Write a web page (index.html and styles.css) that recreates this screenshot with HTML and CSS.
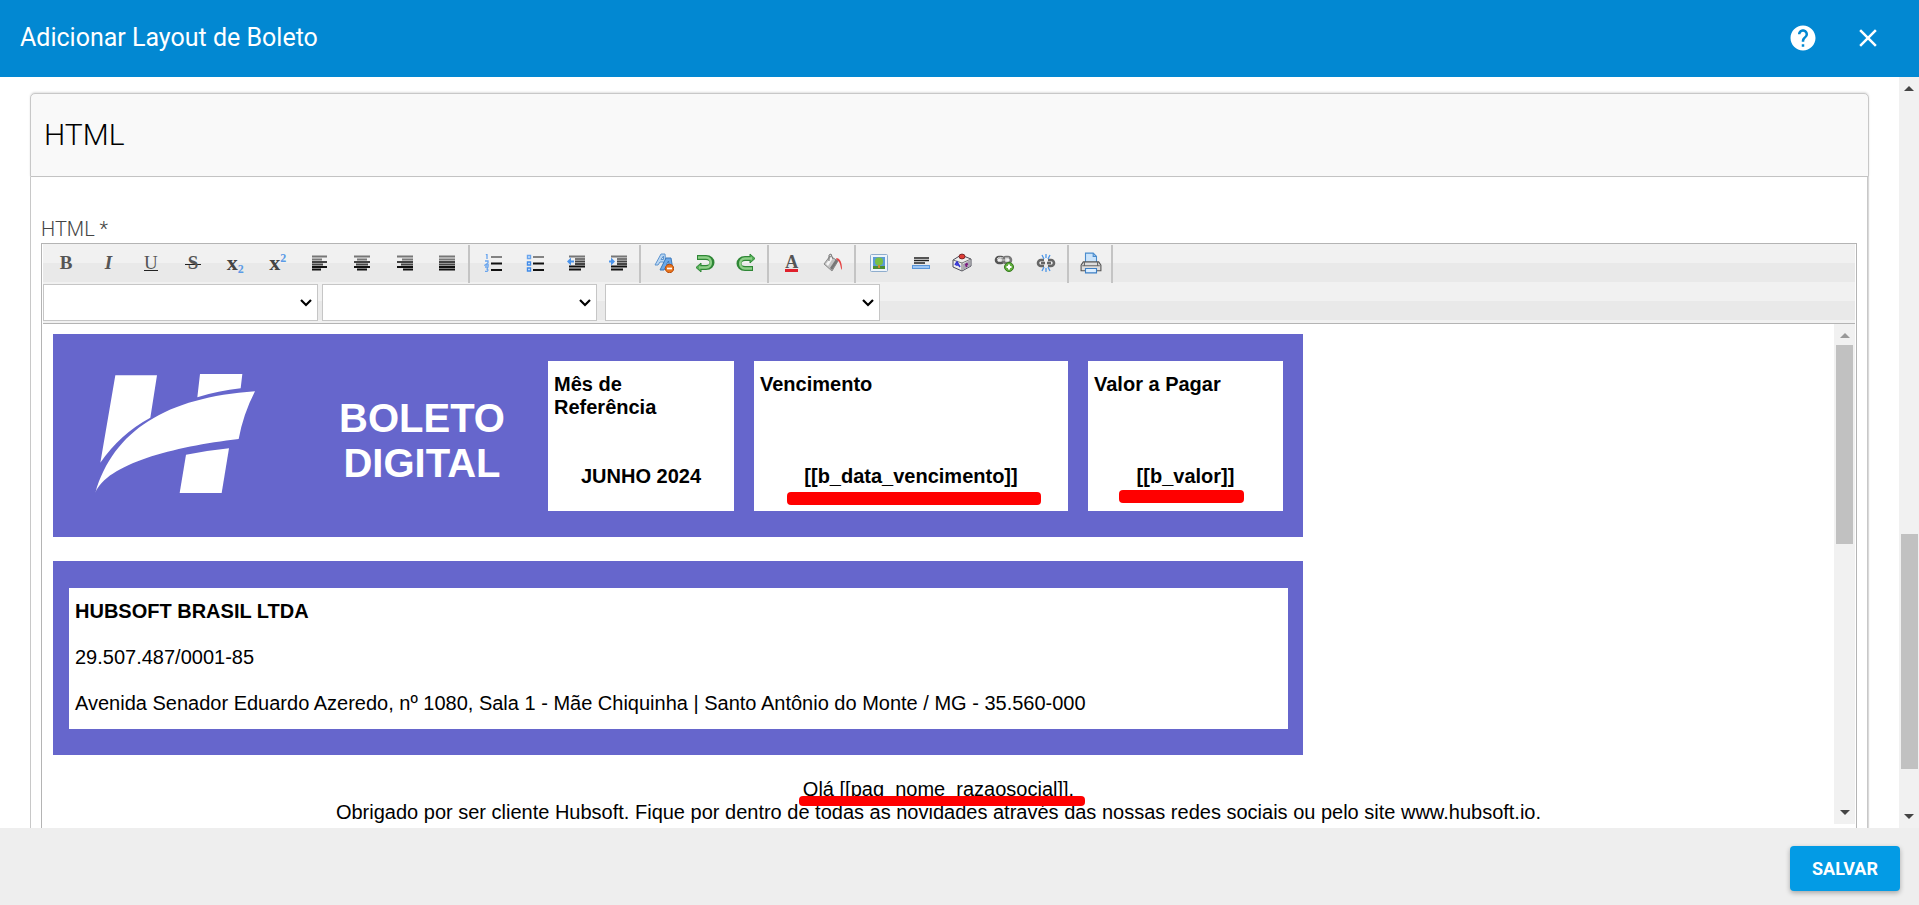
FILE: index.html
```html
<!DOCTYPE html>
<html lang="pt-BR">
<head>
<meta charset="utf-8">
<title>Adicionar Layout de Boleto</title>
<link rel="stylesheet" href="styles.css">
</head>
<body>
<div class="dialog">
  <header class="topbar">
    <h1 class="topbar-title">Adicionar Layout de Boleto</h1>
    <button class="icon-button" type="button" aria-label="Ajuda">
      <svg width="30" height="30" viewBox="0 0 24 24"><path fill="#fff" d="M12 2C6.48 2 2 6.48 2 12s4.48 10 10 10 10-4.480 10-10S17.520 2 12 2zm1 17h-2v-2h2v2zm2.070-7.750l-.9.920C13.450 12.900 13 13.500 13 15h-2v-.5c0-1.100.450-2.100 1.170-2.830l1.240-1.260c.370-.360.590-.860.590-1.410 0-1.100-.9-2-2-2s-2 .9-2 2H8c0-2.210 1.790-4 4-4s4 1.790 4 4c0 .880-.360 1.680-.930 2.250z"/></svg>
    </button>
    <button class="icon-button" type="button" aria-label="Fechar">
      <svg width="30" height="30" viewBox="0 0 24 24"><path fill="#fff" d="M19 6.410L17.590 5 12 10.590 6.410 5 5 6.410 10.590 12 5 17.590 6.410 19 12 13.410 17.590 19 19 17.590 13.410 12z"/></svg>
    </button>
  </header>

  <div class="main">
    <div class="main-content">
      <section class="panel">
        <h2 class="panel-head">HTML</h2>
        <div class="panel-body">
          <div class="field-label">HTML *</div>
          <div class="editor">
            <div class="toolbar">
              <div class="tool-row">
                <div class="group g10">
                  <button class="tool" type="button" aria-label="Negrito"><b>B</b></button>
                  <button class="tool" type="button" aria-label="Itálico"><i>I</i></button>
                  <button class="tool" type="button" aria-label="Sublinhado"><span class="under">U</span></button>
                  <button class="tool" type="button" aria-label="Tachado"><span class="strike">S</span></button>
                  <button class="tool script" type="button" aria-label="Subscrito"><b>x</b><span class="low">2</span></button>
                  <button class="tool script" type="button" aria-label="Sobrescrito"><b>x</b><span class="high">2</span></button>
                  <button class="tool" type="button" aria-label="Alinhar à esquerda"><svg width="16" height="16" viewBox="0 0 16 16"><path class="l1" d="M0 1.500h15M0 4.500h10"/><path class="l2" d="M0 7h15M0 9.500h11"/><path class="l3" d="M0 12h15M0 14.500h9"/></svg></button>
                  <button class="tool" type="button" aria-label="Centralizar"><svg width="16" height="16" viewBox="0 0 16 16"><path class="l1" d="M0 1.500h16M3 4.500h10"/><path class="l2" d="M0 7h16M2 9.500h12"/><path class="l3" d="M0 12h16M3 14.500h10"/></svg></button>
                  <button class="tool" type="button" aria-label="Alinhar à direita"><svg width="16" height="16" viewBox="0 0 16 16"><path class="l1" d="M0 1.500h16M5 4.500h11"/><path class="l2" d="M0 7h16M4 9.500h12"/><path class="l3" d="M0 12h16M6 14.500h10"/></svg></button>
                  <button class="tool" type="button" aria-label="Justificar"><svg width="16" height="16" viewBox="0 0 16 16"><path class="l1" d="M0 1.500h16M0 4.500h16"/><path class="l2" d="M0 7h16M0 9.500h16"/><path class="l3" d="M0 12h16M0 14.500h16"/></svg></button>
                </div>
                <div class="group g4">
                  <button class="tool" type="button" aria-label="Lista numerada"><svg width="18" height="18" viewBox="0 0 18 18"><path d="M2 1l1-1v5M1 7h3v2l-3 2h4M1 13h3l-1 2 1 1-1 1.500H1" fill="none" stroke="#69a5ee" stroke-width="1.300"/><path class="l1" d="M7 3h11"/><path class="l3" d="M7 9.500h11M7 16h11"/></svg></button>
                  <button class="tool" type="button" aria-label="Lista"><svg width="18" height="18" viewBox="0 0 18 18"><g fill="#dcecff" stroke="#69a5ee" stroke-width="1.400"><path d="M1.500 1.500h3v3h-3z"/><path d="M1.500 8h3v3h-3zM1.500 14h3v3h-3z" stroke="#3f8ae8"/></g><path class="l1" d="M7 3h11"/><path class="l3" d="M7 9.500h11M7 16h11"/></svg></button>
                  <button class="tool" type="button" aria-label="Diminuir recuo"><svg width="18" height="16" viewBox="0 0 18 16"><path class="l1" d="M2 1.500h16M8 4h10"/><path class="l2" d="M8 6.500h10M8 9h10"/><path class="l3" d="M2 11.500h16M2 14.500h12"/><path d="M0 6.500l4-4v3h3v2H4v3z" fill="#4b93ea"/></svg></button>
                  <button class="tool" type="button" aria-label="Aumentar recuo"><svg width="18" height="16" viewBox="0 0 18 16"><path class="l1" d="M2 1.500h16M8 4h10"/><path class="l2" d="M8 6.500h10M8 9h10"/><path class="l3" d="M2 11.500h16M2 14.500h12"/><path d="M6 6.500l-4-4v3H0v2h2v3z" fill="#4b93ea"/></svg></button>
                </div>
                <div class="group g3">
                  <button class="tool" type="button" aria-label="Remover formatação"><svg width="20" height="20" viewBox="0 0 20 20"><path d="M1 12L7 1h4l1 11H9.500V9H6l-2 3zM7 6.500h2.500V3z" fill="#b9d6f3" stroke="#5c94cf"/><path d="M6 17l6-12h5l2 12h-4v-2.500h-3.500L10 17zM12.500 11.500H15L14.500 8z" fill="#6ca8e8" stroke="#3b78ba"/><circle cx="15.500" cy="15.500" r="4.200" fill="#e8741e" stroke="#b84c0c"/><path d="M13 15.500h5" stroke="#fff" stroke-width="1.700"/></svg></button>
                  <button class="tool" type="button" aria-label="Desfazer"><svg width="20" height="20" viewBox="0 0 20 20"><path d="M2 4.500h9c8 0 8 10 0 10H5" fill="none" stroke="#2f8736" stroke-width="5"/><path d="M6 10v9l-5-4.500z" fill="#55b058" stroke="#2f8736"/><path d="M3 4.500h8c6.500 0 6.500 10 0 10H4" fill="none" stroke="#8ed088" stroke-width="2.400"/></svg></button>
                  <button class="tool" type="button" aria-label="Refazer"><svg width="20" height="20" viewBox="0 0 20 20"><path d="M17 15.500H9c-8 0-8-10 0-10h6" fill="none" stroke="#2f8736" stroke-width="5"/><path d="M14 1v9l5-4.500z" fill="#55b058" stroke="#2f8736"/><path d="M16 15.500H9c-6.500 0-6.500-10 0-10h7" fill="none" stroke="#8ed088" stroke-width="2.400"/></svg></button>
                </div>
                <div class="group g2">
                  <button class="tool" type="button" aria-label="Cor da fonte"><b class="font-color">A</b></button>
                  <button class="tool" type="button" aria-label="Cor de realce"><svg width="20" height="20" viewBox="0 0 20 20"><path d="M1 11L7 3l8 5-6 10z" fill="#c4c4c4" stroke="#8b8b8b"/><path d="M3 11l5-7 2 1-5 8z" fill="#f4f4f4"/><path d="M7 15l6-9 2 2-6 9z" fill="#777"/><path d="M6 8V2l2-1 2 5" fill="none" stroke="#777"/><path d="M13 5c4 0 6 4 6 12-2-2-1-8-5-10z" fill="#e64444"/></svg></button>
                </div>
                <div class="group g5">
                  <button class="tool" type="button" aria-label="Inserir imagem"><svg width="18" height="18" viewBox="0 0 18 18"><rect x=".5" y=".5" width="17" height="17" rx="1" fill="#edf4fb" stroke="#8fadcd"/><rect x="3" y="3" width="12" height="11" fill="#5c9bd5"/><path d="M3 12h12v3H3z" fill="#4d8d30"/><circle cx="9" cy="7.500" r="4" fill="#79c043"/><path d="M8 11h2v3H8z" fill="#c98a2c"/></svg></button>
                  <button class="tool" type="button" aria-label="Linha horizontal"><svg width="18" height="12" viewBox="0 0 18 12"><path d="M2 1h15M2 3.500h15M2 6h11" stroke="#222" stroke-width="1.300"/><rect x=".5" y="8.500" width="17" height="3" fill="#9cc6f5" stroke="#5a95d8"/></svg></button>
                  <button class="tool raised" type="button" aria-label="Inserir símbolo"><svg width="20" height="20" viewBox="0 0 20 20"><path d="M1 8l8-5 10 4v7l-9 5-9-4z" fill="#eee" stroke="#4e4e5a"/><path d="M1 8l9 3 9-4M10 11v8" fill="none" stroke="#777"/><path d="M11 12l7-4v6l-7 4z" fill="#aaa6b2"/><path d="M3 13l2-3 3 5M4 13h3" fill="none" stroke="#3434d4" stroke-width="1.600"/><path d="M13 13l3-1M14.500 11v4" stroke="#7d1c80" stroke-width="1.600"/><ellipse cx="10" cy="4.500" rx="3" ry="2.400" fill="#df3c35" stroke="#7b292b"/></svg></button>
                  <button class="tool" type="button" aria-label="Inserir link"><svg width="20" height="18" viewBox="0 0 20 18"><g fill="none"><rect x="2" y="3" width="8" height="6" rx="3" stroke="#555" stroke-width="2.600"/><rect x="9" y="3" width="8" height="6" rx="3" stroke="#777" stroke-width="2.600"/><path d="M3 5c1-2 4-2 6-1M11 4h4M6 6h7" stroke="#ddd" stroke-width="1"/></g><circle cx="15" cy="13" r="4.500" fill="#62ae3f" stroke="#347a1c"/><path d="M15 10.500v5M12.500 13h5" stroke="#fff" stroke-width="2"/></svg></button>
                  <button class="tool" type="button" aria-label="Remover link"><svg width="20" height="18" viewBox="0 0 20 18"><g fill="none" stroke="#666" stroke-width="2.600"><path d="M8 6H5a3 3 0 0 0 0 6h3M12 6h3a3 3 0 0 1 0 6h-3M5 9h4M11 9h4"/></g><path d="M6 1l2 4M10 0v4M14 1l-2 4M6 17l2-4M10 18v-4M14 17l-2-4" stroke="#4c96e8" stroke-width="1.300"/></svg></button>
                </div>
                <div class="group g1">
                  <button class="tool" type="button" aria-label="Imprimir"><svg width="22" height="22" viewBox="0 0 20 20"><path d="M5 10V1h7l3 3v6z" fill="#cbe4fb" stroke="#4a8ccd"/><path d="M12 1v3h3" fill="none" stroke="#4a8ccd"/><path d="M3 9h14l2 3v5H1v-5z" fill="#ddd" stroke="#555"/><path d="M2 12.500h16M4 9v3M16 9v3" stroke="#666"/><path d="M5 15h10v4H5z" fill="#dceeff" stroke="#3c7fc4"/></svg></button>
                </div>
              </div>
              <div class="select-row">
                <label class="pick"><select aria-label="Fonte"><option></option></select><svg class="chevron" width="12" height="8" viewBox="0 0 12 8"><path d="M1 1l5 5 5-5" fill="none" stroke="#000" stroke-width="2.200"/></svg></label>
                <label class="pick"><select aria-label="Tamanho"><option></option></select><svg class="chevron" width="12" height="8" viewBox="0 0 12 8"><path d="M1 1l5 5 5-5" fill="none" stroke="#000" stroke-width="2.200"/></svg></label>
                <label class="pick spaced"><select aria-label="Estilo"><option></option></select><svg class="chevron" width="12" height="8" viewBox="0 0 12 8"><path d="M1 1l5 5 5-5" fill="none" stroke="#000" stroke-width="2.200"/></svg></label>
              </div>
            </div>

            <div class="frame">
              <div class="document">
                <div class="banner">
                  <div class="logo">
                    <svg width="160" height="119" viewBox="0 0 480 357"><g fill="#fff"><path d="M61 4h125l-20 127Q75 180 16 266z"/><path d="M315 0h127l-5 43Q370 50 307 70z"/><path d="M1 357C55 170 215 70 480 52Q445 120 431 195C235 218 35 270 1 357z"/><path d="M273 242Q335 230 402 223L380 357H254z"/></g></svg>
                  </div>
                  <div class="banner-title">BOLETO DIGITAL</div>
                  <div class="box"><span>Mês de<br>Referência</span><span class="value">JUNHO 2024</span></div>
                  <div class="box"><span>Vencimento</span><span class="value">[[b_data_vencimento]]<span class="mark mark-date"></span></span></div>
                  <div class="box"><span>Valor a Pagar</span><span class="value">[[b_valor]]<span class="mark mark-value"></span></span></div>
                </div>
                <div class="company">
                  <div class="company-box">
                    <p><b>HUBSOFT BRASIL LTDA</b></p>
                    <p>29.507.487/0001-85</p>
                    <p>Avenida Senador Eduardo Azeredo, nº 1080, Sala 1 - Mãe Chiquinha | Santo Antônio do Monte / MG - 35.560-000</p>
                  </div>
                </div>
                <p class="greeting"><span class="marked">Olá [[pag_nome_razaosocial]].<span class="mark mark-name"></span></span><br>Obrigado por ser cliente Hubsoft. Fique por dentro de todas as novidades através das nossas redes sociais ou pelo site www.hubsoft.io.</p>
              </div>
              <div class="scrollbar inner-bar">
                <span class="arrow up dim"></span>
                <span class="thumb"></span>
                <span class="arrow down"></span>
              </div>
            </div>
          </div>
        </div>
      </section>
    </div>
    <div class="scrollbar page-bar">
      <span class="arrow up"></span>
      <span class="thumb"></span>
      <span class="arrow down"></span>
    </div>
  </div>

  <footer class="footer">
    <button class="save" type="button">SALVAR</button>
  </footer>
</div>
</body>
</html>
```
FILE: styles.css
```css
* { box-sizing: border-box; }

body {
  margin: 0;
  font-family: Roboto, "Liberation Sans", sans-serif;
  background: #fff;
}

button, select { font: inherit; margin: 0; }
svg { display: block; }
p { margin: 0; }

.dialog {
  display: flex;
  flex-direction: column;
  height: 100vh;
  overflow: hidden;
}

/* Top bar */
.topbar {
  flex: none;
  display: flex;
  align-items: center;
  gap: 15px;
  height: 77px;
  padding: 0 26px 2px 20px;
  background: #0288d2;
  color: #fff;
}
.topbar-title {
  flex: 1;
  margin: 0;
  font-size: 25px;
  font-weight: 400;
}
.icon-button {
  display: flex;
  align-items: center;
  justify-content: center;
  width: 50px;
  height: 50px;
  padding: 0;
  border: 0;
  background: none;
}

/* Scrolling area */
.main {
  flex: 1;
  min-height: 0;
  display: flex;
}
.main-content {
  flex: 1;
  min-width: 0;
  display: flex;
  padding: 16px 30px 0;
  overflow: hidden;
}
.panel {
  flex: 1;
  min-width: 0;
  display: flex;
  flex-direction: column;
}
.panel-head {
  flex: none;
  display: flex;
  align-items: center;
  height: 84px;
  margin: 0;
  padding: 0 13px 2px;
  border: 1px solid #c8c8c8;
  border-radius: 5px 5px 0 0;
  box-shadow: 0 -1px 2px rgba(0, 0, 0, 0.12);
  background: #f9f9f9;
  color: #000;
  font-size: 30px;
  font-weight: 300;
}
.panel-body {
  flex: 1;
  min-height: 0;
  display: flex;
  flex-direction: column;
  margin-right: 1px;
  padding: 40px 10px 0;
  border: solid #c8c8c8;
  border-width: 0 1px;
  box-shadow: 1px 0 1px rgba(0, 0, 0, 0.15);
}
.field-label {
  margin-bottom: 2px;
  color: #444;
  font-size: 20px;
  font-weight: 300;
  line-height: 24px;
}

/* Editor */
.editor {
  flex: 1;
  min-height: 0;
  display: flex;
  flex-direction: column;
  padding: 0 1px;
  border: 1px solid #b4b4b4;
  border-bottom: 0;
}
.toolbar {
  flex: none;
  padding: 1px 0 2px;
  border-bottom: 1px solid #b4b4b4;
  background: repeating-linear-gradient(#f1f1f1 0 19px, #e9e9e9 19px 38px);
}
.tool-row { display: flex; height: 38px; }
.group {
  display: grid;
  grid-auto-flow: column;
  grid-auto-columns: 1fr;
  padding-left: 2px;
  border-right: 2px solid #c4c4c4;
}
.g10 { width: 427px; }
.g4 { width: 171px; }
.g3 { width: 128px; }
.g2 { width: 87px; }
.g5 { width: 213px; }
.g1 { width: 44px; }
.tool {
  display: flex;
  align-items: center;
  justify-content: center;
  padding: 0 0 2px;
  border: 0;
  background: none;
  color: #555;
  font-family: "Liberation Serif", serif;
  font-size: 19px;
  line-height: 20px;
}
.tool i { font-weight: 700; }
.tool.raised { padding-bottom: 4px; }
.under { border-bottom: 1px solid #222; line-height: 15px; }
.strike {
  padding: 0 3px;
  background: linear-gradient(#222, #222) center 11px / 100% 1px no-repeat;
  font-weight: 700;
}
.script { color: #444; font-size: 22px; }
.low, .high {
  color: #5b9be6;
  font-size: 12px;
  font-weight: 700;
  line-height: 12px;
}
.low { padding-top: 12px; }
.high { padding-bottom: 10px; }
.font-color {
  border-bottom: 3px solid #e0202c;
  font-size: 18px;
  line-height: 14px;
}
.l1, .l2, .l3 { fill: none; stroke-width: 1.8; }
.l1 { stroke: #777; }
.l2 { stroke: #444; }
.l3 { stroke: #111; }

.select-row {
  display: flex;
  gap: 4px;
  margin-top: 1px;
}
.pick { position: relative; width: 275px; }
.pick.spaced { margin-left: 4px; }
.pick select {
  display: block;
  width: 100%;
  height: 37px;
  border: 1px solid #c6c6c6;
  border-radius: 0;
  background: #fff;
  appearance: none;
}
.chevron {
  position: absolute;
  right: 6px;
  top: 15px;
  pointer-events: none;
}

/* Edited document */
.frame {
  flex: 1;
  min-height: 0;
  display: flex;
}
.document {
  flex: 1;
  min-width: 0;
  padding: 10px;
  overflow: hidden;
  color: #000;
  font-family: "Liberation Sans", Arial, sans-serif;
  font-size: 20px;
  line-height: 23px;
}
.banner, .company {
  max-width: 1250px;
  background: #6666cc;
}
.banner {
  display: grid;
  grid-template-columns: 243px 1fr 186px 314px 195px;
  gap: 20px;
  padding: 27px 20px 26px 0;
  font-weight: 700;
}
.logo {
  display: flex;
  align-items: center;
  justify-content: center;
  padding-bottom: 6px;
}
.banner-title {
  align-self: center;
  padding-top: 10px;
  color: #fff;
  font-size: 40px;
  line-height: 45px;
  text-align: center;
}
.box {
  display: flex;
  flex-direction: column;
  justify-content: space-between;
  min-height: 150px;
  padding: 12px 6px 23px;
  background: #fff;
}
.value, .marked { position: relative; }
.value { align-self: center; }
.company {
  margin-top: 24px;
  padding: 27px 15px 26px 16px;
}
.company-box {
  display: grid;
  gap: 23px;
  padding: 12px 6px 14px;
  background: #fff;
}
.greeting {
  margin-top: 23px;
  text-align: center;
}

/* Red highlight strokes */
.mark {
  position: absolute;
  height: 13px;
  border-radius: 4px;
  background: #f00;
}
.mark-date { left: -17px; right: -23px; top: 27px; }
.mark-value { left: -18px; right: -10px; top: 25px; }
.mark-name { left: -4px; right: -11px; top: 18px; height: 10px; }

/* Scrollbars */
.scrollbar {
  flex: none;
  display: flex;
  flex-direction: column;
  align-items: center;
  background: #f1f1f1;
}
.page-bar { width: 20px; padding: 9px 0; }
.inner-bar { width: 21px; margin-bottom: 4px; padding: 9px 0; }
.arrow {
  border: solid transparent;
  border-width: 0 5px;
}
.up { border-bottom: 5px solid #444; }
.down { border-top: 5px solid #444; margin-top: auto; }
.dim { border-bottom-color: #999; }
.thumb { width: 17px; background: #c1c1c1; }
.page-bar .thumb { height: 235px; margin-top: 443px; }
.inner-bar .thumb { height: 199px; margin-top: 7px; }

/* Footer */
.footer {
  flex: none;
  display: flex;
  align-items: center;
  justify-content: flex-end;
  height: 77px;
  padding: 4px 19px 0;
  background: #eee;
}
.save {
  width: 110px;
  height: 45px;
  border: 0;
  border-radius: 4px;
  background: #039be5;
  box-shadow: 0 2px 5px rgba(0, 0, 0, 0.3);
  color: #fff;
  font-size: 18px;
  font-weight: 700;
}
```
